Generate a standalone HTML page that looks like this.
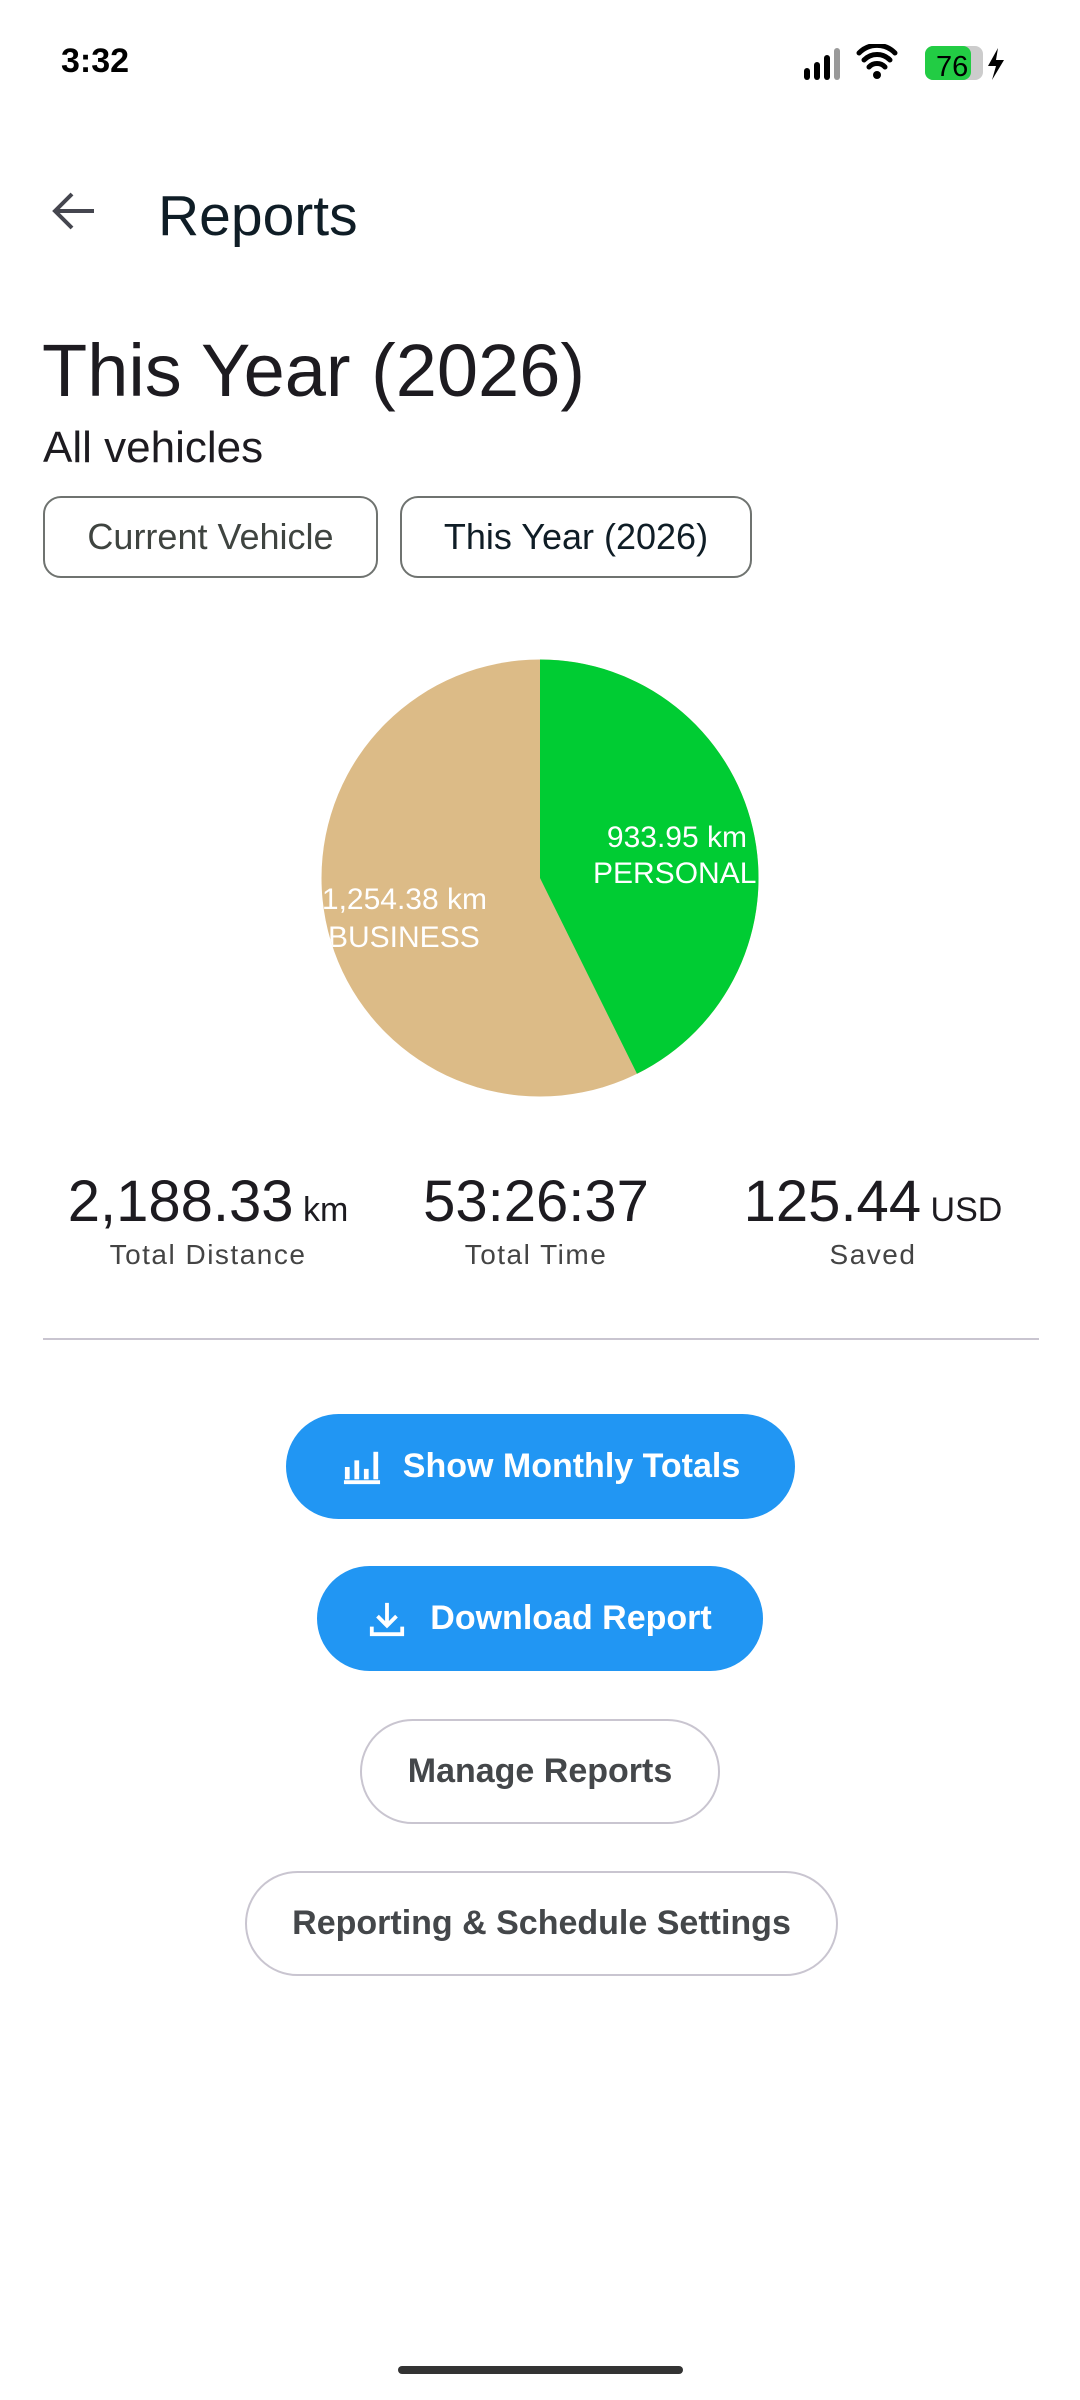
<!DOCTYPE html>
<html><head><meta charset="utf-8"><style>
*{margin:0;padding:0;box-sizing:border-box}
body{width:1080px;height:2400px;background:#fff;position:relative;font-family:"Liberation Sans",sans-serif;overflow:hidden;color:#1d1b20}
.a{position:absolute}
.chip{position:absolute;top:496px;height:82px;border:2px solid #6f7370;border-radius:18px;font-size:36px;display:flex;align-items:center;justify-content:center}
.stat{position:absolute;top:1168px;text-align:center;width:360px}
.stat .n{font-size:58px;color:#1d1b20}
.stat .u{font-size:34px}
.stat .l{font-size:28px;color:#444;letter-spacing:1.5px;margin-top:4px}
.btn{position:absolute;left:0;border-radius:60px;display:flex;align-items:center;justify-content:center;font-size:34px;font-weight:bold;height:105px}
.blue{background:#2196f3;color:#fff}
.out{border:2px solid #c9c5d0;color:#44474a}
</style></head><body>
<div class="a" style="left:61px;top:42px;font-size:34px;font-weight:bold;color:#000">3:32</div>
<svg class="a" style="left:800px;top:44px" width="210" height="40" viewBox="0 0 210 40">
<rect x="4" y="24" width="6" height="12" rx="3" fill="#000"/>
<rect x="14" y="18" width="6" height="18" rx="3" fill="#000"/>
<rect x="24" y="11" width="6" height="25" rx="3" fill="#000"/>
<rect x="34" y="4" width="6" height="32" rx="3" fill="#999"/>
<path d="M69 23 a11 11 0 0 1 16 0 M64 16 a18 18 0 0 1 26 0 M59 9 a25 25 0 0 1 36 0" stroke="#000" stroke-width="5" fill="none" stroke-linecap="round"/>
<circle cx="77" cy="31" r="4" fill="#000"/>
<rect x="125" y="2" width="58" height="34" rx="8" fill="#ccc"/>
<rect x="125" y="2" width="46" height="34" rx="8" fill="#22cc44"/>
<text x="136" y="32" font-size="29" font-family="Liberation Sans" fill="#000">76</text>
<path d="M198 4 L188 22 H196 L192 36 L204 16 H196 Z" fill="#000"/>
</svg>
<svg class="a" style="left:50px;top:190px" width="48" height="42" viewBox="0 0 48 42"><path d="M44 21 H6 M22 4 L5 21 L22 38" stroke="#45464f" stroke-width="4" fill="none"/></svg>
<div class="a" style="left:158px;top:183px;font-size:57px;color:#0f1d26">Reports</div>
<div class="a" style="left:42px;top:328px;font-size:74px;color:#1d1b20">This Year (2026)</div>
<div class="a" style="left:43px;top:423px;font-size:44px;color:#1d1b20">All vehicles</div>
<div class="chip" style="left:43px;width:335px;color:#3f4440">Current Vehicle</div>
<div class="chip" style="left:400px;width:352px;color:#0f1d26">This Year (2026)</div>
<svg class="a" style="left:0;top:0" width="1080" height="1120">
<defs><clipPath id="c"><circle cx="540" cy="878" r="218.5"/></clipPath></defs>
<circle cx="540" cy="878" r="218.5" fill="#dcbb87"/>
<path d="M540 878 L540 659.5 A218.5 218.5 0 0 1 637 1073.8 Z" fill="#00cc33"/>
<g clip-path="url(#c)" fill="#fff" font-family="Liberation Sans" font-size="30">
<text x="747" y="847" text-anchor="end">933.95 km</text>
<text x="593" y="883">PERSONAL</text>
<text x="487" y="909" text-anchor="end">1,254.38 km</text>
<text x="328" y="947">BUSINESS</text>
</g></svg>
<div class="stat" style="left:28px"><div class="n">2,188.33<span class="u"> km</span></div><div class="l">Total Distance</div></div>
<div class="stat" style="left:356px"><div class="n">53:26:37</div><div class="l">Total Time</div></div>
<div class="stat" style="left:693px"><div class="n">125.44<span class="u"> USD</span></div><div class="l">Saved</div></div>
<div class="a" style="left:43px;top:1338px;width:996px;height:2px;background:#c9c5d0"></div>
<div class="btn blue" style="left:286px;top:1414px;width:509px"><svg width="42" height="38" viewBox="0 0 44 40" style="margin-right:20px"><path d="M3 36 H41" stroke="#fff" stroke-width="4"/><rect x="4" y="20" width="5" height="13" fill="#fff"/><rect x="14" y="13" width="5" height="20" fill="#fff"/><rect x="24" y="22" width="5" height="11" fill="#fff"/><rect x="34" y="4" width="5" height="29" fill="#fff"/></svg>Show Monthly Totals</div>
<div class="btn blue" style="left:317px;top:1566px;width:446px"><svg width="38" height="38" viewBox="0 0 40 40" style="margin-right:24px"><path d="M20 3 V26 M10 17 L20 27 L30 17 M4 28 V36 H36 V28" stroke="#fff" stroke-width="4" fill="none"/></svg>Download Report</div>
<div class="btn out" style="left:360px;top:1719px;width:360px">Manage Reports</div>
<div class="btn out" style="left:245px;top:1871px;width:593px">Reporting &amp; Schedule Settings</div>
<div class="a" style="left:398px;top:2366px;width:285px;height:8px;border-radius:4px;background:#333"></div>
</body></html>
